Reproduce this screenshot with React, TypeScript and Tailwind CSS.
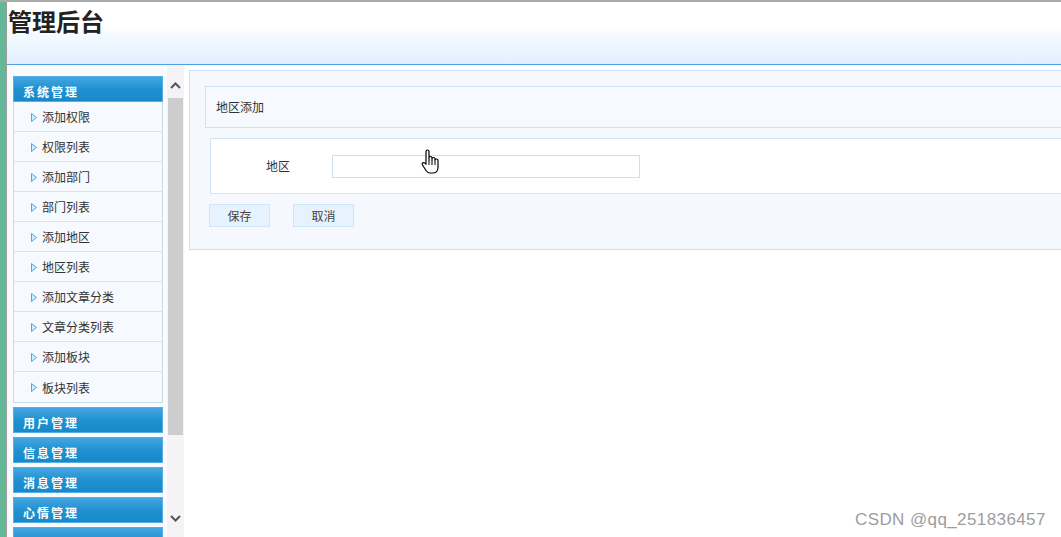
import React from "react";

// ── Data ─────────────────────────────────────────────────────────────────

const systemItems = [
  "添加权限",
  "权限列表",
  "添加部门",
  "部门列表",
  "添加地区",
  "地区列表",
  "添加文章分类",
  "文章分类列表",
  "添加板块",
  "板块列表",
];

const otherGroups = ["用户管理", "信息管理", "消息管理", "心情管理", ""];

const cjk = { fontFamily: '"Noto Sans CJK SC", "Noto Sans", sans-serif' };

// ── Pieces ───────────────────────────────────────────────────────────────

function GroupHeader({ title }: { title: string }) {
  return (
    <div className="flex h-[26px] shrink-0 items-center border border-[#56aee6] bg-gradient-to-b from-[#43a6e0] via-[#1f91d1] to-[#1789c9] pl-[9px] pt-[5px] text-[12px] font-bold tracking-[2px] text-white">
      {title}
    </div>
  );
}

function Arrow() {
  return (
    <svg width="6" height="9" viewBox="0 0 6 9" className="shrink-0">
      <path d="M0.5 0.5 L5.5 4.5 L0.5 8.5 Z" fill="#d4ecfb" stroke="#4aa8e4" strokeWidth="1" />
    </svg>
  );
}

function Chevron({ up }: { up?: boolean }) {
  return (
    <svg width="11" height="7" viewBox="0 0 11 7">
      <path
        d={up ? "M1 6 L5.5 1.5 L10 6" : "M1 1 L5.5 5.5 L10 1"}
        fill="none"
        stroke="#555"
        strokeWidth="2"
      />
    </svg>
  );
}

function HandCursor() {
  return (
    <svg
      width="18"
      height="26"
      viewBox="0 0 18 26"
      className="pointer-events-none absolute left-[421px] top-[147px]"
    >
      <path
        d="M5 2.5 a1.5 1.5 0 0 1 3 0 V11 V9 a1.5 1.5 0 0 1 3 0 V11 V10 a1.5 1.5 0 0 1 3 0 V11.5 a1.5 1.5 0 0 1 3 0 V18 C17 21 15.5 24 12.5 24 H9 C7 24 6 23 5 21.5 L1.5 16 C0.8 15 1.2 13.8 2.3 13.6 C3.2 13.4 4 14 5 15.2 Z"
        fill="#fff"
        stroke="#000"
        strokeWidth="1.2"
        strokeLinejoin="round"
      />
      <path d="M8 11 V16 M11 11 V16 M14 12 V16" stroke="#000" strokeWidth="1" />
    </svg>
  );
}

// ── Page ─────────────────────────────────────────────────────────────────

export default function App() {
  return (
    <div
      className="relative flex h-[537px] w-full overflow-hidden border-t-2 border-[#ababab] bg-white text-[#333]"
      style={cjk}
    >
      {/* left green strip */}
      <div className="w-[7px] shrink-0 border-r border-[#9c9c9c] bg-[#64b898]" />

      <div className="flex min-w-0 flex-1 flex-col">
        {/* Header */}
        <div className="h-[63px] shrink-0 border-b border-[#4ba3e3] bg-gradient-to-b from-white from-40% via-[#f5faff] to-[#e1f0fd]">
          <h1 className="pl-[1px] pt-[2px] text-[24px] font-bold leading-[34px] text-[#222]">
            管理后台
          </h1>
        </div>

        <div className="flex min-h-0 flex-1">
          {/* Sidebar */}
          <div className="flex w-[177px] shrink-0">
            <div className="flex w-[160px] flex-col gap-[4px] overflow-hidden bg-[#f9fbfe] pl-[6px] pr-[4px] pt-[11px]">
              <div className="shrink-0">
                <GroupHeader title="系统管理" />
                <div className="border-x border-b border-[#c9dcea] bg-[#f6f9fe]">
                  {systemItems.map((item, i) => (
                    <div
                      key={item}
                      className={
                        "flex h-[30px] items-center gap-[5px] pl-[17px] pt-[1px] text-[12px] text-[#333] " +
                        (i < systemItems.length - 1 ? "border-b border-[#d6e4ee]" : "")
                      }
                    >
                      <Arrow />
                      <span>{item}</span>
                    </div>
                  ))}
                </div>
              </div>
              {otherGroups.map((g, i) => (
                <GroupHeader key={i} title={g} />
              ))}
            </div>

            {/* scrollbar */}
            <div className="flex w-[17px] flex-col items-center bg-[#f6f3f6]">
              <div className="flex h-[33px] shrink-0 items-end justify-center pb-[9px]">
                <Chevron up />
              </div>
              <div className="h-[337px] w-[15px] shrink-0 bg-[#cdcdcd]" />
              <div className="flex flex-1 items-end pb-[15px]">
                <Chevron />
              </div>
            </div>
          </div>

          {/* Main content */}
          <div className="min-w-0 flex-1 overflow-hidden pl-[5px] pt-[5px]">
            <div className="w-[1000px] border border-[#cae2f7] bg-[#f5f9fe] px-[15px] pb-[22px] pt-[15px]">
              <div className="flex h-[42px] items-center border border-[#cde3f5] bg-[#f6f9fd] pl-[10px] text-[12px] text-[#333]">
                地区添加
              </div>

              <div className="ml-[5px] mt-[10px] flex h-[56px] items-center border border-[#cfe4f6] bg-white">
                <div className="w-[121px] pl-[55px] text-[12px] text-[#333]">地区</div>
                <input
                  type="text"
                  className="h-[23px] w-[308px] border border-[#c8e1f6] bg-white outline-none"
                />
              </div>

              <div className="ml-[4px] mt-[10px] flex gap-[23px]">
                <button className="h-[23px] w-[61px] border border-[#cfe5f8] bg-[#e6f2fd] text-[12px] text-[#444]">
                  保存
                </button>
                <button className="h-[23px] w-[61px] border border-[#cfe5f8] bg-[#e6f2fd] text-[12px] text-[#444]">
                  取消
                </button>
              </div>
            </div>
          </div>
        </div>
      </div>

      <HandCursor />

      {/* watermark */}
      <div
        className="pointer-events-none absolute left-[855px] top-[505px] text-[17px] tracking-[0.4px] text-[#9d9d9d]"
        style={{ fontFamily: '"Liberation Sans", Arial, sans-serif' }}
      >
        CSDN @qq_251836457
      </div>
    </div>
  );
}
